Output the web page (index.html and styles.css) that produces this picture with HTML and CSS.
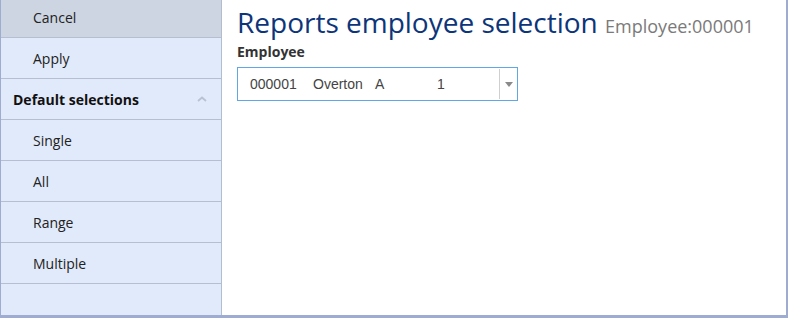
FILE: index.html
```html
<!DOCTYPE html>
<html lang="en">
<head>
    <meta charset="UTF-8">
    <title>Reports employee selection</title>
    <link rel="stylesheet" href="styles.css">
</head>
<body>
    <div class="frame">
        <!-- side menu -->
        <nav class="sidebar">
            <div class="item item-active">Cancel</div>
            <div class="item">Apply</div>
            <div class="group">
                <span>Default selections</span>
                <svg class="caret" width="10" height="6" viewBox="0 0 10 6"><path d="M1 5 L5 1.5 L9 5" fill="none" stroke="#b9c2d2" stroke-width="1.8"/></svg>
            </div>
            <div class="item">Single</div>
            <div class="item">All</div>
            <div class="item">Range</div>
            <div class="item">Multiple</div>
        </nav>

        <!-- main form -->
        <main class="content">
            <h1>Reports employee selection <small>Employee:000001</small></h1>
            <label class="field-label">Employee</label>
            <div class="select">
                <div class="select-value">
                    <span class="col-id">000001</span>
                    <span class="col-name">Overton</span>
                    <span class="col-init">A</span>
                    <span class="col-num">1</span>
                </div>
                <div class="select-arrow">
                    <svg width="8" height="5" viewBox="0 0 8 5"><path d="M0 0 H8 L4 5 Z" fill="#8a8a8a"/></svg>
                </div>
            </div>
        </main>
    </div>
</body>
</html>
```

FILE: styles.css
```css
* {
    margin: 0;
    padding: 0;
    box-sizing: border-box;
}

html, body {
    width: 788px;
    height: 318px;
    overflow: hidden;
    background-color: #fff;
    font-family: 'Open Sans', sans-serif;
}

.frame {
    display: flex;
    width: 788px;
    height: 318px;
    border-left: 1px solid #9dacd0;
    border-right: 2px solid #9dacd0;
    border-bottom: 3px solid #9dacd0;
}

.sidebar {
    width: 221px;
    flex-shrink: 0;
    background-color: #e1eafa;
    border-right: 1px solid #b3bdd0;
    margin-top: -3px;
}

.item,
.group {
    height: 41px;
    border-bottom: 1px solid #b6bfd1;
    display: flex;
    align-items: center;
    font-size: 14px;
    color: #222;
}

.item {
    padding-left: 32px;
}

.item-active {
    background-color: #cdd5e3;
}

.group {
    padding-left: 12px;
    padding-right: 14px;
    justify-content: space-between;
    font-weight: bold;
    color: #111;
}

.content {
    flex: 1;
    padding: 4px 15px;
}

h1 {
    font-size: 28px;
    font-weight: normal;
    color: #0d357a;
    line-height: 36px;
    white-space: nowrap;
}

h1 small {
    font-size: 18px;
    color: #7a7a7a;
}

.field-label {
    display: block;
    font-size: 14px;
    font-weight: bold;
    color: #333;
    margin-top: -2px;
    line-height: 20px;
}

.select {
    display: flex;
    width: 281px;
    height: 34px;
    margin-top: 5px;
    border: 1px solid #62a6e6;
    background-color: #fff;
}

.select-value {
    flex: 1;
    display: flex;
    align-items: center;
    padding-left: 12px;
    font-family: 'Liberation Sans', Arial, sans-serif;
    font-size: 14px;
    color: #444;
}

.col-id { width: 63px; }
.col-name { width: 62px; }
.col-init { width: 62px; }

.select-arrow {
    width: 18px;
    border-left: 1px solid #cfcfcf;
    margin: 1px 0;
    display: flex;
    align-items: center;
    justify-content: center;
}
```
